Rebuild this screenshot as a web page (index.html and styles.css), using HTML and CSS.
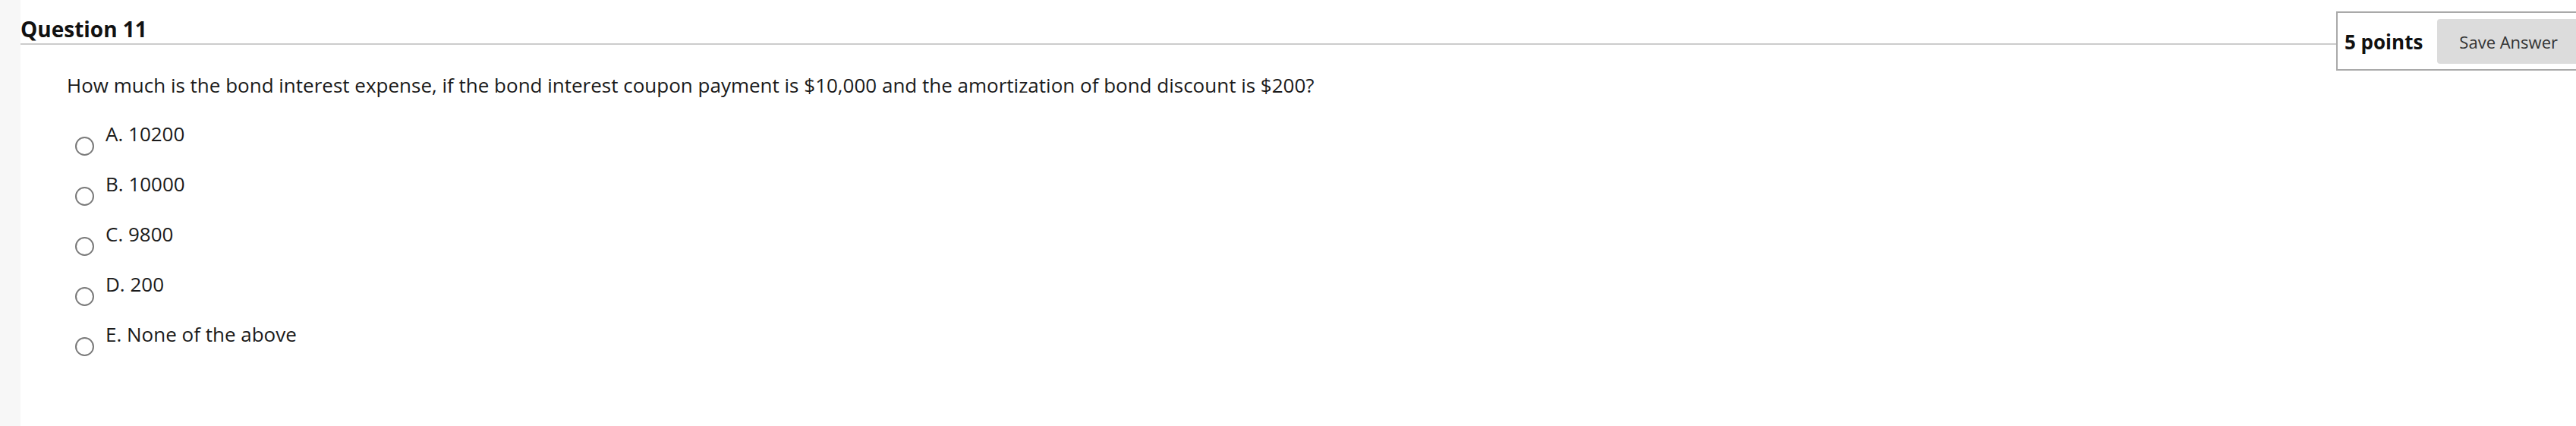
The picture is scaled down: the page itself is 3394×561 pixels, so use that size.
FILE: index.html
```html
<!DOCTYPE html>
<html>
<head>
    <title>Question 11</title>
    <link rel="stylesheet" href="styles.css">
</head>
<body>
    <div class="page">
        <div class="sidebar"></div>
        <div class="main">
            <div class="question-header">
                <h2>Question 11</h2>
                <div class="points-box">
                    <span class="points">5 points</span>
                    <button class="save-btn">Save Answer</button>
                </div>
            </div>
            <div class="question-body">
                <p class="question-text">How much is the bond interest expense, if the bond interest coupon payment is $10,000 and the amortization of bond discount is $200?</p>
                <div class="options">
                    <div class="option">
                        <input type="radio" name="q11" id="opt-a">
                        <label for="opt-a">A. 10200</label>
                    </div>
                    <div class="option">
                        <input type="radio" name="q11" id="opt-b">
                        <label for="opt-b">B. 10000</label>
                    </div>
                    <div class="option">
                        <input type="radio" name="q11" id="opt-c">
                        <label for="opt-c">C. 9800</label>
                    </div>
                    <div class="option">
                        <input type="radio" name="q11" id="opt-d">
                        <label for="opt-d">D. 200</label>
                    </div>
                    <div class="option">
                        <input type="radio" name="q11" id="opt-e">
                        <label for="opt-e">E. None of the above</label>
                    </div>
                </div>
            </div>
        </div>
    </div>
</body>
</html>
```

FILE: styles.css
```css
* {
    margin: 0px;
    padding: 0px;
    box-sizing: border-box;
}
html, body {
    height: 100%;
    overflow: hidden;
}
body {
    font-family: "Open Sans", sans-serif;
    color: #111;
    background: #fff;
}
.page {
    display: flex;
    height: 100%;
}
.sidebar {
    width: 27px;
    flex-shrink: 0;
    background: #f7f7f7;
}
.main {
    flex: 1;
    min-width: 0;
}
.question-header {
    display: flex;
    align-items: flex-start;
}
.question-header h2 {
    flex: 1;
    font-size: 28px;
    font-weight: 700;
    line-height: normal;
    padding: 19px 0px 0px 0px;
    border-bottom: 2px solid #cccccc;
}
.points-box {
    display: flex;
    align-items: center;
    flex-shrink: 0;
    margin-top: 15px;
    margin-right: -15px;
    padding: 8px 8px 7px 9px;
    border: 2px solid #a9a9a9;
}
.points {
    font-size: 26px;
    font-weight: 700;
    margin-right: 19px;
}
.save-btn {
    font-family: "Open Sans", sans-serif;
    font-size: 22px;
    color: #333;
    background: #dcdcdc;
    border: none;
    border-radius: 4px;
    height: 59px;
    padding: 0px 29px;
    cursor: pointer;
}
.question-body {
    padding: 1px 0px 0px 61px;
}
.question-text {
    font-size: 26px;
    line-height: normal;
    color: #1a1a1a;
}
.options {
    display: flex;
    flex-direction: column;
    gap: 19px;
    margin-top: 28px;
}
.option {
    display: flex;
    align-items: flex-start;
}
.option input {
    appearance: none;
    width: 25px;
    height: 25px;
    margin: 22px 15px 0px 11px;
    border: 2px solid #7a7a7a;
    border-radius: 50%;
    flex-shrink: 0;
}
.option label {
    font-size: 26px;
    line-height: normal;
    color: #1a1a1a;
}
```
